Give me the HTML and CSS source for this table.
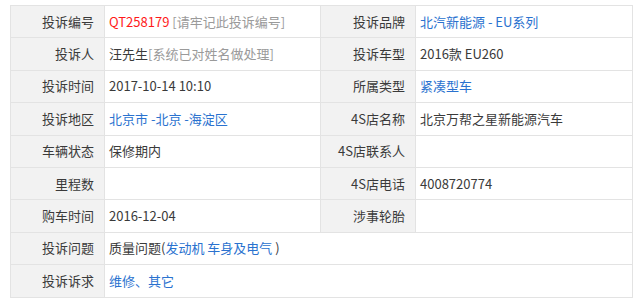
FILE: index.html
```html
<!DOCTYPE html>
<html lang="zh-CN">
<head>
<meta charset="utf-8">
<link rel="stylesheet" href="styles.css">
</head>
<body>
<div class="wrap">
<table class="info">
  <colgroup>
    <col class="c-label1"><col class="c-val1"><col class="c-label2"><col class="c-val2">
  </colgroup>
  <tr>
    <th>投诉编号</th>
    <td><span class="red">QT258179</span> <span class="hint">[请牢记此投诉编号]</span></td>
    <th>投诉品牌</th>
    <td><span class="blue">北汽新能源 - EU系列</span></td>
  </tr>
  <tr>
    <th>投诉人</th>
    <td>汪先生<span class="hint">[系统已对姓名做处理]</span></td>
    <th>投诉车型</th>
    <td>2016款 EU260</td>
  </tr>
  <tr>
    <th>投诉时间</th>
    <td>2017-10-14 10:10</td>
    <th>所属类型</th>
    <td><span class="blue">紧凑型车</span></td>
  </tr>
  <tr>
    <th>投诉地区</th>
    <td><span class="blue">北京市 -北京 -海淀区</span></td>
    <th>4S店名称</th>
    <td>北京万帮之星新能源汽车</td>
  </tr>
  <tr>
    <th>车辆状态</th>
    <td>保修期内</td>
    <th>4S店联系人</th>
    <td></td>
  </tr>
  <tr>
    <th>里程数</th>
    <td></td>
    <th>4S店电话</th>
    <td>4008720774</td>
  </tr>
  <tr>
    <th>购车时间</th>
    <td>2016-12-04</td>
    <th>涉事轮胎</th>
    <td></td>
  </tr>
  <tr>
    <th>投诉问题</th>
    <td colspan="3">质量问题(<span class="blue">发动机 车身及电气 </span>)</td>
  </tr>
  <tr>
    <th>投诉诉求</th>
    <td colspan="3"><span class="blue">维修、其它</span></td>
  </tr>
</table>
</div>
</body>
</html>
```

FILE: styles.css
```css
html, body {
  margin: 0;
  padding: 0;
  background: #ffffff;
}
.wrap {
  padding: 5px 0 0 10px;
}
.info {
  border-collapse: collapse;
  width: 622px;
  table-layout: fixed;
  font-family: "Noto Sans CJK SC", "Noto Sans", sans-serif;
  font-size: 13px;
  color: #3a3a3a;
}
.c-label1 { width: 94px; }
.c-val1 { width: 216px; }
.c-label2 { width: 95px; }
.c-val2 { width: 217px; }
.info th,
.info td {
  border: 1px solid #e3e3e3;
  height: 31.4px;
  padding: 0;
  vertical-align: middle;
  white-space: nowrap;
  line-height: 16px;
}
.info th {
  background: #f2f2f2;
  font-weight: normal;
  text-align: right;
  padding-right: 10px;
}
.info td {
  background: #ffffff;
  text-align: left;
  padding-left: 4px;
}
.red { color: #ff1a1a; }
.hint { color: #9a9a9a; }
.blue { color: #2a72cf; }
```
